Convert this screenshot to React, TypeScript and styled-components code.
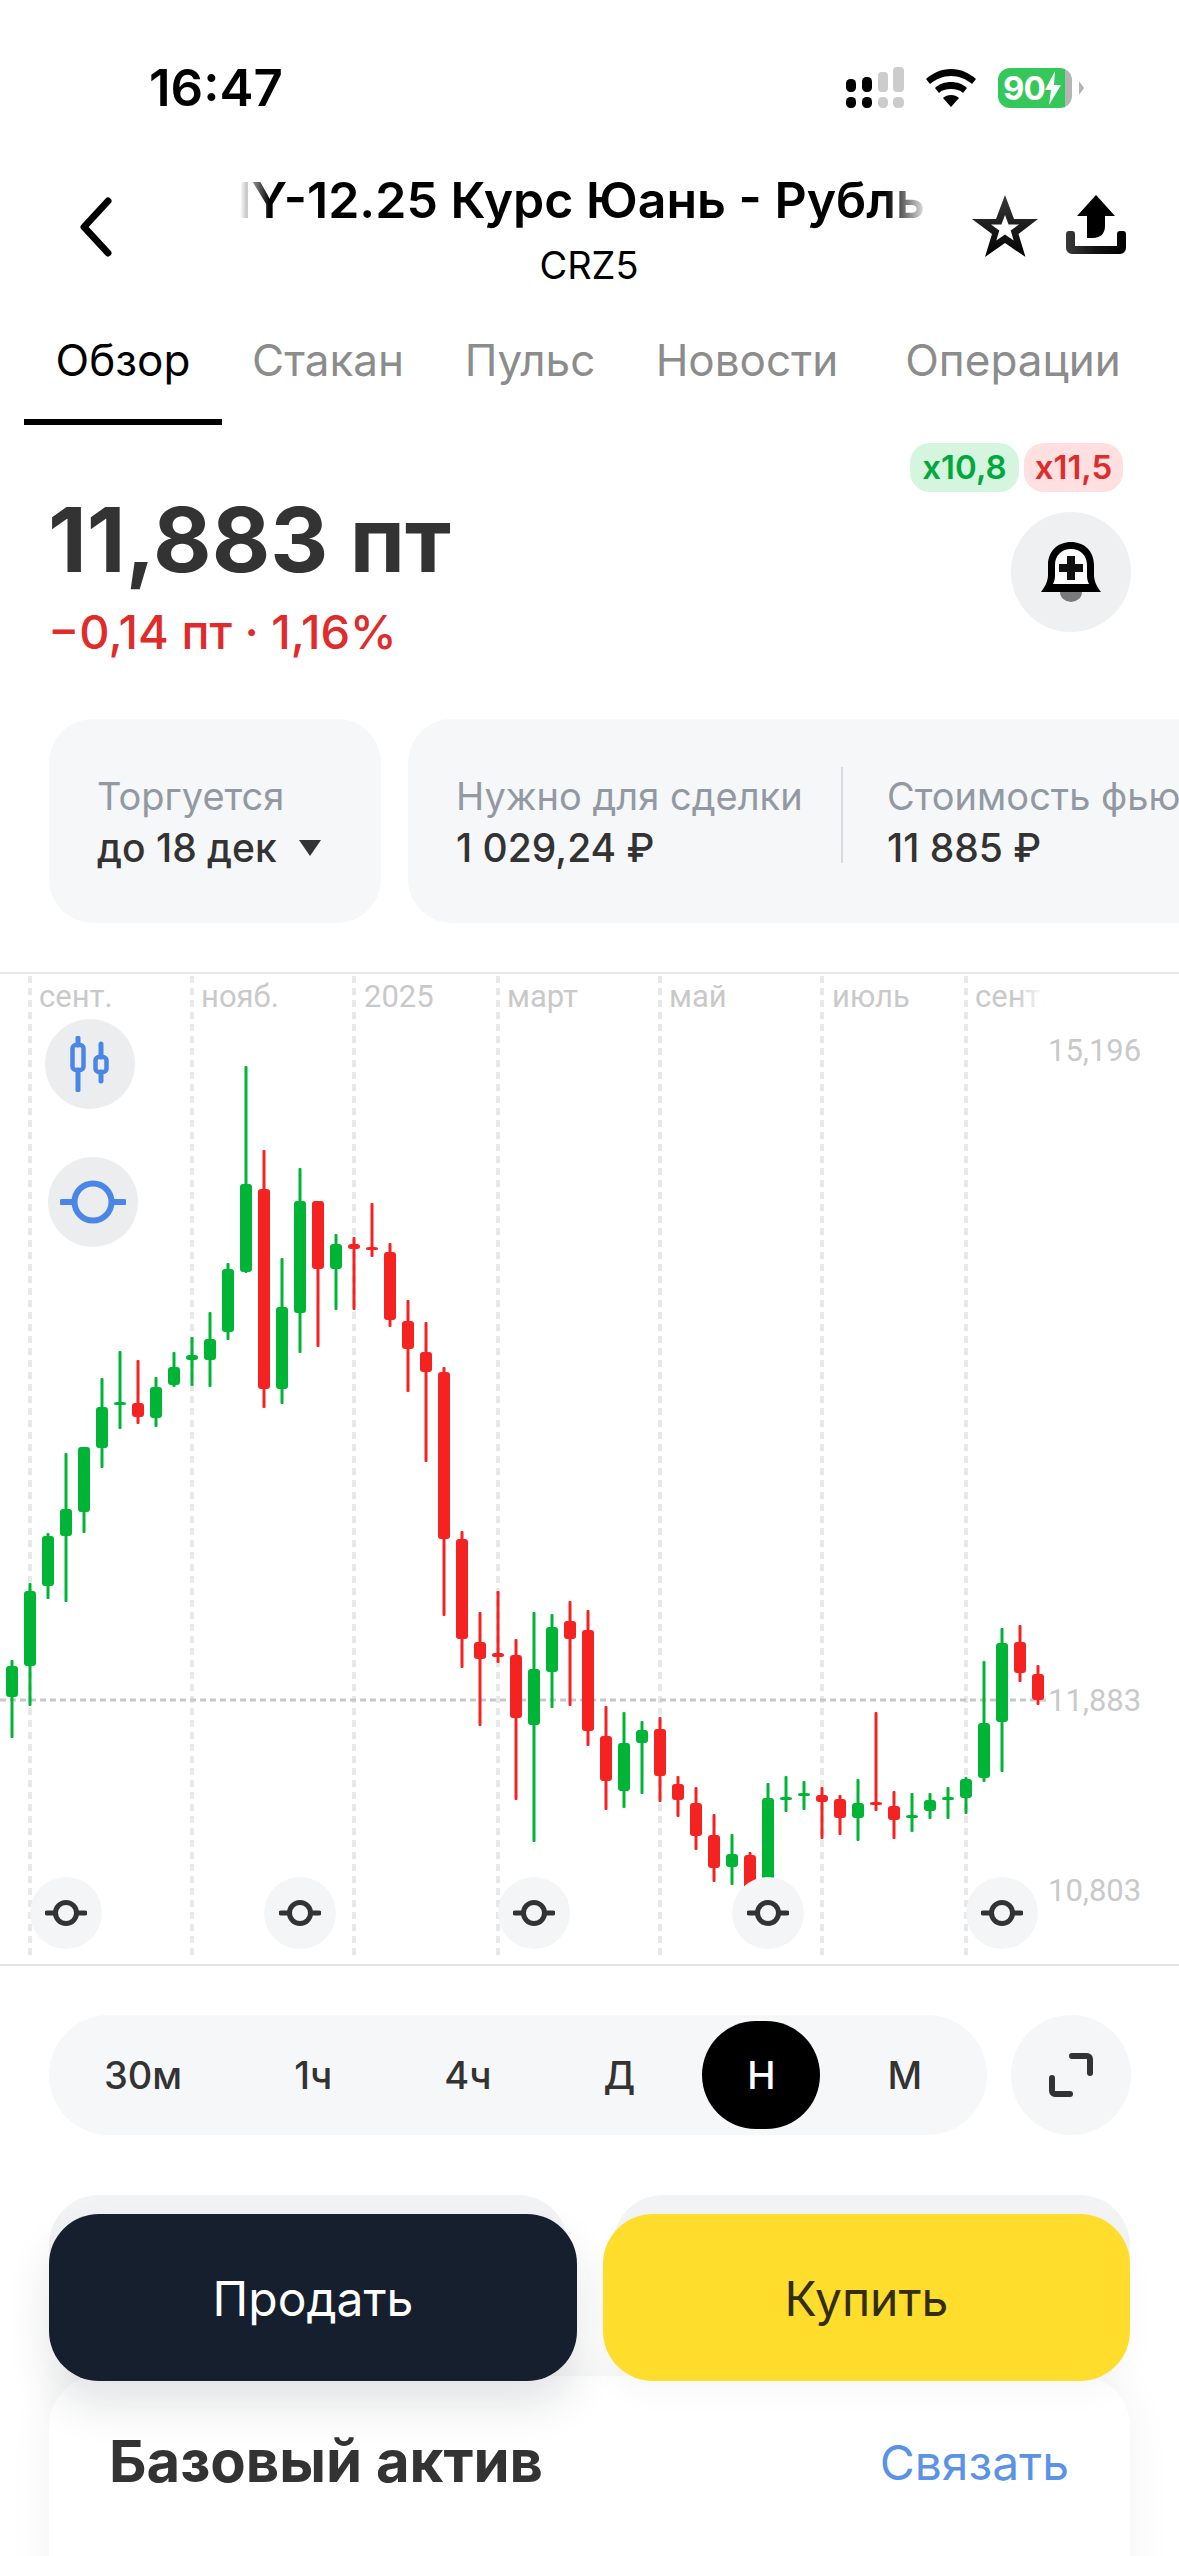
import React from 'react';
import styled, { createGlobalStyle } from 'styled-components';

const GREEN = '#00b536';
const RED = '#f52222';
const BLUE = '#4a86e8';
const DARK = '#333333';

const GlobalStyle = createGlobalStyle`
  html, body {
    margin: 0;
    padding: 0;
    background: #fff;
  }
  * {
    box-sizing: border-box;
  }
`;

const Page = styled.div`
  width: 1179px;
  height: 2556px;
  overflow: hidden;
  background: #fff;
  color: ${DARK};
  font-family: Inter, Roboto, 'Noto Sans', sans-serif;
`;

/* status bar */
const StatusBar = styled.div`
  height: 170px;
  padding: 67px 0 0 149px;
  display: flex;
  align-items: flex-start;
`;

const Time = styled.div`
  width: 697px;
  font-size: 51px;
  line-height: 42px;
  font-weight: 600;
  color: #000;
`;

const StatusIcons = styled.div`
  display: flex;
  align-items: center;
  gap: 22px;
`;

const Battery = styled.div`
  width: 74px;
  height: 40px;
  border-radius: 12px;
  background: linear-gradient(90deg, #34c759 91%, #b5b5b5 91%);
  color: #fff;
  font-size: 33px;
  font-weight: 700;
  line-height: 40px;
  letter-spacing: -1px;
  display: flex;
  align-items: center;
  padding-left: 5px;
  position: relative;

  &::after {
    content: '';
    position: absolute;
    right: -12px;
    top: 13px;
    border-left: 5px solid #b5b5b5;
    border-top: 7px solid transparent;
    border-bottom: 7px solid transparent;
  }
`;

/* header */
const Header = styled.div`
  height: 120px;
  display: grid;
  grid-template-columns: 240px 685px 1fr;
  align-items: start;
`;

const BackButton = styled.div`
  padding: 27px 0 0 79px;
  line-height: 0;
`;

const TitleBlock = styled.div`
  min-width: 0;
  display: flex;
  flex-direction: column;
  align-items: center;
`;

const Title = styled.div`
  width: 100%;
  display: flex;
  justify-content: flex-end;
  white-space: nowrap;
  overflow: hidden;
  font-size: 50px;
  line-height: 60px;
  font-weight: 600;
  color: #000;
  -webkit-mask-image: linear-gradient(90deg, transparent 0, #000 30px, #000 645px, transparent 690px);
  mask-image: linear-gradient(90deg, transparent 0, #000 30px, #000 645px, transparent 690px);
`;

const Ticker = styled.div`
  margin: 12px 0 0 13px;
  font-size: 38px;
  line-height: 46px;
  color: #000;
`;

const HeaderActions = styled.div`
  padding: 25px 0 0 47px;
  display: flex;
  align-items: flex-start;
  gap: 28px;
`;

/* tabs */
const Tabs = styled.div`
  margin-top: 30px;
  height: 105px;
  padding-left: 24px;
  display: flex;
`;

const Tab = styled.div<{ $active?: boolean; $width: number }>`
  width: ${(p) => p.$width}px;
  height: 105px;
  padding-top: 14px;
  text-align: center;
  font-size: 44px;
  line-height: 52px;
  white-space: nowrap;
  color: ${(p) => (p.$active ? '#000' : '#8c8c8c')};
  border-bottom: 6px solid ${(p) => (p.$active ? '#000' : 'transparent')};
`;

/* price */
const PriceBlock = styled.div`
  height: 294px;
  padding: 18px 48px 0 48px;
  display: flex;
  justify-content: space-between;
`;

const PriceColumn = styled.div`
  padding-top: 47px;
`;

const Price = styled.div`
  font-size: 90px;
  line-height: 100px;
  font-weight: 700;
  color: ${DARK};
`;

const Change = styled.div`
  margin-top: 16px;
  font-size: 47px;
  line-height: 52px;
  font-weight: 500;
  color: #e02b2b;
`;

const SideColumn = styled.div`
  display: flex;
  flex-direction: column;
  align-items: flex-end;
`;

const Badges = styled.div`
  margin-right: 8px;
  display: flex;
  gap: 5px;
`;

const Badge = styled.div<{ $tone: 'up' | 'down'; $width: number }>`
  width: ${(p) => p.$width}px;
  height: 49px;
  border-radius: 20px;
  text-align: center;
  font-size: 33px;
  line-height: 49px;
  font-weight: 600;
  color: ${(p) => (p.$tone === 'up' ? '#00a93c' : '#dd2c2c')};
  background: ${(p) => (p.$tone === 'up' ? '#d6f5df' : '#ffdfdf')};
`;

const RoundButton = styled.div<{ $bg: string; $size: number }>`
  width: ${(p) => p.$size}px;
  height: ${(p) => p.$size}px;
  border-radius: 50%;
  background: ${(p) => p.$bg};
  display: flex;
  align-items: center;
  justify-content: center;
  flex-shrink: 0;
`;

const BellSlot = styled.div`
  margin-top: 20px;
`;

/* stats */
const StatsRow = styled.div`
  height: 204px;
  padding-left: 49px;
  display: flex;
  gap: 27px;
`;

const StatCard = styled.div<{ $width: number }>`
  flex-shrink: 0;
  width: ${(p) => p.$width}px;
  height: 204px;
  border-radius: 44px;
  background: #f6f7f8;
  padding: 54px 0 0 48px;
  display: flex;
  align-items: flex-start;
`;

const Stat = styled.div<{ $width?: number }>`
  white-space: nowrap;
  flex-shrink: 0;
  width: ${(p) => (p.$width ? `${p.$width}px` : 'auto')};
`;

const StatDivider = styled.div`
  width: 2px;
  height: 96px;
  margin: -6px 44px 0 0;
  background: #d8dadd;
`;

const StatLabel = styled.div`
  font-size: 38px;
  line-height: 46px;
  color: #9299a2;
`;

const StatValue = styled.div`
  margin-top: 6px;
  font-size: 39px;
  line-height: 46px;
  font-weight: 500;
  color: ${DARK};
  display: flex;
  align-items: center;
  gap: 22px;
`;

const Caret = styled.span`
  width: 0;
  height: 0;
  border-left: 11px solid transparent;
  border-right: 11px solid transparent;
  border-top: 16px solid ${DARK};
`;

/* chart */
const ChartArea = styled.div`
  margin-top: 49px;
  height: 994px;
  position: relative;
  border-top: 2px solid #e6e7e9;
  border-bottom: 2px solid #e2e3e5;
`;

const ChartSvg = styled.svg`
  position: absolute;
  top: -2px;
  left: 0;
  display: block;
`;

const AxisText = styled.text`
  font-family: Roboto, sans-serif;
  font-size: 31px;
  fill: #c9c9c9;
`;

const ToggleSlot = styled.div<{ $x: number; $y: number }>`
  position: absolute;
  left: ${(p) => p.$x}px;
  top: ${(p) => p.$y}px;
`;

/* timeframe */
const TimeframeRow = styled.div`
  margin-top: 49px;
  padding: 0 48px 0 49px;
  display: flex;
  gap: 24px;
`;

const TimeframeBar = styled.div`
  width: 938px;
  height: 120px;
  border-radius: 60px;
  background: #f6f7f8;
  padding-left: 10px;
  display: flex;
  align-items: center;
  gap: 22px;
`;

const TimeframeItem = styled.div<{ $active?: boolean }>`
  height: 108px;
  padding: 0 45px;
  border-radius: 54px;
  font-size: 38px;
  line-height: 108px;
  font-weight: 500;
  color: ${(p) => (p.$active ? '#fff' : DARK)};
  background: ${(p) => (p.$active ? '#000' : 'transparent')};
`;

/* trade */
const TradeRow = styled.div`
  position: relative;
  z-index: 2;
  margin-top: 79px;
  padding: 0 49px;
  display: grid;
  grid-template-columns: 528px 527px;
  gap: 26px;
`;

const TradeButton = styled.div<{ $side: 'sell' | 'buy' }>`
  position: relative;
  height: 167px;
  border-radius: 50px;
  text-align: center;
  font-size: 48px;
  line-height: 170px;
  color: ${(p) => (p.$side === 'sell' ? '#fff' : '#332d0a')};
  background: ${(p) => (p.$side === 'sell' ? '#151f2e' : '#ffdd2d')};
  box-shadow: ${(p) => (p.$side === 'sell' ? '0 24px 44px rgba(21, 31, 46, 0.12)' : '0 14px 30px rgba(0, 0, 0, 0.03)')};

  &::before {
    content: '';
    position: absolute;
    z-index: -1;
    top: -19px;
    bottom: 19px;
    left: ${(p) => (p.$side === 'sell' ? '0' : '10px')};
    right: ${(p) => (p.$side === 'sell' ? '9px' : '0')};
    border-radius: 50px;
    background: #f1f3f5;
  }
`;

const AssetCard = styled.div`
  position: relative;
  z-index: 1;
  margin: -5px 49px 0;
  height: 260px;
  padding: 53px 61px 0 60px;
  border-radius: 50px;
  background: #fff;
  box-shadow: 0 0 44px rgba(0, 0, 0, 0.06);
  display: flex;
  justify-content: space-between;
  align-items: flex-start;
`;

const AssetTitle = styled.div`
  font-size: 58px;
  line-height: 64px;
  font-weight: 700;
  color: ${DARK};
`;

const AssetLink = styled.div`
  margin-top: 2px;
  font-size: 48px;
  line-height: 64px;
  color: #5a92e6;
`;

/* [high, body top, body bottom, low, colour] in page coordinates, x = 12 + 18 * index */
type Candle = [number, number, number, number, 'g' | 'r'];

const candles: Candle[] = [
  [1660, 1666, 1697, 1738, 'g'], [1583, 1591, 1666, 1706, 'g'], [1533, 1536, 1586, 1599, 'g'],
  [1453, 1509, 1536, 1602, 'g'], [1447, 1447, 1512, 1533, 'g'], [1378, 1407, 1448, 1468, 'g'],
  [1351, 1402, 1405, 1429, 'g'], [1360, 1403, 1417, 1424, 'r'], [1377, 1387, 1418, 1427, 'g'],
  [1352, 1367, 1385, 1387, 'g'], [1337, 1355, 1360, 1386, 'g'], [1312, 1339, 1360, 1387, 'g'],
  [1263, 1269, 1332, 1340, 'g'], [1066, 1184, 1272, 1273, 'g'], [1150, 1189, 1389, 1408, 'r'],
  [1258, 1307, 1389, 1404, 'g'], [1168, 1201, 1313, 1353, 'g'], [1201, 1201, 1269, 1347, 'r'],
  [1234, 1244, 1269, 1310, 'g'], [1237, 1244, 1249, 1310, 'r'], [1203, 1247, 1250, 1257, 'r'],
  [1243, 1252, 1320, 1327, 'r'], [1300, 1321, 1349, 1392, 'r'], [1322, 1352, 1372, 1462, 'r'],
  [1367, 1372, 1539, 1616, 'r'], [1531, 1539, 1639, 1668, 'r'], [1612, 1642, 1659, 1726, 'r'],
  [1591, 1653, 1657, 1663, 'r'], [1639, 1655, 1718, 1800, 'r'], [1612, 1669, 1725, 1842, 'g'],
  [1614, 1627, 1672, 1708, 'g'], [1601, 1621, 1639, 1706, 'r'], [1610, 1630, 1731, 1746, 'r'],
  [1706, 1736, 1781, 1810, 'r'], [1712, 1743, 1791, 1808, 'g'], [1721, 1730, 1743, 1794, 'g'],
  [1717, 1729, 1776, 1802, 'r'], [1776, 1784, 1800, 1817, 'r'], [1787, 1803, 1836, 1850, 'r'],
  [1814, 1835, 1868, 1882, 'r'], [1834, 1854, 1867, 1885, 'g'], [1852, 1855, 1892, 1892, 'r'],
  [1783, 1798, 1892, 1892, 'g'], [1776, 1797, 1799, 1812, 'g'], [1781, 1793, 1796, 1810, 'g'],
  [1787, 1795, 1802, 1839, 'r'], [1795, 1799, 1818, 1835, 'r'], [1779, 1803, 1818, 1841, 'g'],
  [1712, 1802, 1805, 1811, 'r'], [1791, 1806, 1820, 1839, 'r'], [1793, 1815, 1817, 1832, 'g'],
  [1793, 1800, 1811, 1819, 'g'], [1787, 1797, 1799, 1819, 'g'], [1777, 1779, 1798, 1814, 'g'],
  [1661, 1723, 1778, 1782, 'g'], [1628, 1643, 1722, 1772, 'g'], [1625, 1642, 1673, 1682, 'r'],
  [1665, 1674, 1700, 1705, 'r'],
];

const gridLines = [30, 192, 354, 498, 660, 822, 966];
const monthLabels: [string, number][] = [
  ['сент.', 39], ['нояб.', 201], ['2025', 364], ['март', 507], ['май', 669], ['июль', 832],
];
const priceLabels: [string, number][] = [['15,196', 1061], ['11,883', 1711], ['10,803', 1901]];
const markerCenters = [66, 300, 534, 768, 1002];

const CandleChart = () => (
  <ChartSvg width="1179" height="994" viewBox="0 972 1179 994">
    <defs>
      <linearGradient id="labelFade" x1="975" x2="1045" y1="0" y2="0" gradientUnits="userSpaceOnUse">
        <stop offset="0.6" stopColor="#c9c9c9" />
        <stop offset="1" stopColor="#c9c9c9" stopOpacity="0" />
      </linearGradient>
    </defs>
    {gridLines.map((x) => (
      <line key={x} x1={x} x2={x} y1="976" y2="1960" stroke="#e8e8e8" strokeWidth="4" strokeDasharray="7 5" />
    ))}
    <line x1="0" x2="1046" y1="1700" y2="1700" stroke="#c8c8cc" strokeWidth="3" strokeDasharray="6 4" />
    {monthLabels.map(([text, x]) => (
      <AxisText key={x} x={x} y="1007">{text}</AxisText>
    ))}
    <AxisText x="975" y="1007" style={{ fill: 'url(#labelFade)' }}>сент.</AxisText>
    {priceLabels.map(([text, y]) => (
      <AxisText key={text} x="1048" y={y}>{text}</AxisText>
    ))}
    {candles.map(([high, top, bottom, low, tone], i) => {
      const x = 12 + i * 18;
      const color = tone === 'g' ? GREEN : RED;
      return (
        <g key={x} fill={color}>
          <rect x={x - 1.5} y={high} width="3" height={low - high} rx="1" />
          <rect x={x - 6} y={top} width="12" height={Math.max(bottom - top, 3)} rx="3" />
        </g>
      );
    })}
  </ChartSvg>
);

const CandlesIcon = () => (
  <svg width="40" height="56" viewBox="0 0 40 56" fill="none" stroke={BLUE} strokeLinecap="round">
    <path d="M8 2v7M8 34v20" strokeWidth="5" />
    <rect x="2.5" y="9" width="11" height="25" rx="3.5" strokeWidth="4.5" />
    <path d="M31 8v13M31 36v9" strokeWidth="5" />
    <rect x="25.5" y="21" width="11" height="15" rx="3.5" strokeWidth="4.5" />
  </svg>
);

const LineToggleIcon = () => (
  <svg width="66" height="48" viewBox="0 0 66 48" fill="none" stroke={BLUE}>
    <circle cx="33" cy="24" r="18.5" strokeWidth="6" />
    <path d="M2 24h12M52 24h12" strokeWidth="6" strokeLinecap="round" />
  </svg>
);

const MarkerIcon = () => (
  <svg width="42" height="28" viewBox="0 0 42 28" fill="none" stroke={DARK}>
    <circle cx="21" cy="14" r="10.5" strokeWidth="5" />
    <path d="M2 14h8M32 14h8" strokeWidth="5" strokeLinecap="round" />
  </svg>
);

const BackIcon = () => (
  <svg width="34" height="60" viewBox="0 0 34 60" fill="none" stroke="#000" strokeWidth="7" strokeLinecap="round" strokeLinejoin="round">
    <path d="M29 4L5 30l24 26" />
  </svg>
);

const StarIcon = () => (
  <svg width="66" height="62" viewBox="0 0 66 62">
    <defs>
      <linearGradient id="starFill" x1="0" x2="0" y1="0" y2="1">
        <stop offset="0" stopColor="#3a3a3a" />
        <stop offset="1" stopColor="#000" />
      </linearGradient>
    </defs>
    <path d="M33 0l9 24h24L46.500 39l7 23L33 48 13 62l7-23L0 24h24z" fill="url(#starFill)" />
    <path d="M33 20l3.600 9.500H47l-8.300 6 3 10L33 39.500 24.300 45.500l3-10-8.300-6h10.400z" fill="#fff" />
  </svg>
);

const ShareIcon = () => (
  <svg width="60" height="60" viewBox="0 0 60 60">
    <defs>
      <linearGradient id="trayFill" x1="0" x2="1" y1="0" y2="0">
        <stop offset="0" stopColor="#3a3a3a" />
        <stop offset="0.5" stopColor="#111" />
        <stop offset="1" stopColor="#000" />
      </linearGradient>
    </defs>
    <path d="M30 0L49 21H39v10c0 7-4 12-12 12h-6V21H11z" fill="#000" />
    <path
      d="M0 39a3 3 0 0 1 3-3h3a3 3 0 0 1 3 3v12h42V39a3 3 0 0 1 3-3h3a3 3 0 0 1 3 3v14a6 6 0 0 1-6 6H6a6 6 0 0 1-6-6z"
      fill="url(#trayFill)"
    />
  </svg>
);

const BellIcon = () => (
  <svg width="60" height="60" viewBox="0 0 60 60">
    <path d="M19 50h22a11 10 0 0 1-22 0z" fill="#7a7a7a" />
    <path d="M30 0c13 0 23 9 23 23v10c0 6 3 12 7 17H0c4-5 7-11 7-17V23C7 9 17 0 30 0z" fill="#000" />
    <path d="M30 7c-10 0-16 7-16 16v11c0 3-1 6-2 8h36c-1-2-2-5-2-8V23c0-9-6-16-16-16z" fill="#fff" />
    <path fill="#111" d="M26 14h8v8h8v8h-8v8h-8v-8h-8v-8h8z" />
  </svg>
);

const ExpandIcon = () => (
  <svg width="44" height="44" viewBox="0 0 44 44" fill="none" stroke={DARK} strokeWidth="6" strokeLinecap="round" strokeLinejoin="round">
    <path d="M23 3h15a3 3 0 0 1 3 3v14" />
    <path d="M3 25v13a3 3 0 0 0 3 3h15" />
  </svg>
);

const SignalIcon = () => (
  <svg width="58" height="41" viewBox="0 0 58 41">
    <g fill="#000">
      <rect x="0" y="12" width="10" height="13" rx="4.500" />
      <rect x="16" y="10" width="10" height="15" rx="4.500" />
      <rect x="0" y="30" width="10" height="11" rx="4.500" />
      <rect x="16" y="30" width="10" height="11" rx="4.500" />
    </g>
    <g fill="#cccccc">
      <rect x="32" y="5" width="10" height="20" rx="4" />
      <rect x="47" y="0" width="11" height="25" rx="4" />
      <rect x="32" y="30" width="10" height="11" rx="4.500" />
      <rect x="47" y="30" width="11" height="11" rx="4.500" />
    </g>
  </svg>
);

const WifiIcon = () => (
  <svg width="50" height="38" viewBox="0 0 50 38">
    <path d="M25 0c10 0 18 4 25 10l-4 5C40 10 33 7 25 7S10 10 4 15l-4-5C7 4 15 0 25 0z" fill="#000" />
    <path d="M25 13c6 0 12 2 16 6l-4 5c-3-3-7-4-12-4s-9 1-12 4l-4-5c4-4 10-6 16-6z" fill="#000" />
    <path d="M25 26c3 0 6 1 8 3l-8 9-8-9c2-2 5-3 8-3z" fill="#000" />
  </svg>
);

const BoltIcon = () => (
  <svg width="16" height="34" viewBox="0 0 16 34">
    <path d="M10 0L0 19h6L4 34l12-20H9z" fill="#fff" />
  </svg>
);

const timeframes = ['30м', '1ч', '4ч', 'Д', 'Н', 'М'];

export default function App() {
  return (
    <Page>
      <GlobalStyle />
      <StatusBar>
        <Time>16:47</Time>
        <StatusIcons>
          <SignalIcon />
          <WifiIcon />
          <Battery>
            90
            <BoltIcon />
          </Battery>
        </StatusIcons>
      </StatusBar>

      <Header>
        <BackButton>
          <BackIcon />
        </BackButton>
        <TitleBlock>
          <Title>CNY-12.25 Курс Юань - Рубль</Title>
          <Ticker>CRZ5</Ticker>
        </TitleBlock>
        <HeaderActions>
          <StarIcon />
          <ShareIcon />
        </HeaderActions>
      </Header>

      <Tabs>
        <Tab $active $width={198}>Обзор</Tab>
        <Tab $width={212}>Стакан</Tab>
        <Tab $width={192}>Пульс</Tab>
        <Tab $width={242}>Новости</Tab>
        <Tab $width={290}>Операции</Tab>
      </Tabs>

      <PriceBlock>
        <PriceColumn>
          <Price>11,883 пт</Price>
          <Change>−0,14 пт · 1,16%</Change>
        </PriceColumn>
        <SideColumn>
          <Badges>
            <Badge $tone="up" $width={109}>x10,8</Badge>
            <Badge $tone="down" $width={99}>x11,5</Badge>
          </Badges>
          <BellSlot>
            <RoundButton $bg="#eef0f2" $size={120}>
              <BellIcon />
            </RoundButton>
          </BellSlot>
        </SideColumn>
      </PriceBlock>

      <StatsRow>
        <StatCard $width={332}>
          <Stat>
            <StatLabel>Торгуется</StatLabel>
            <StatValue>
              до 18 дек
              <Caret />
            </StatValue>
          </Stat>
        </StatCard>
        <StatCard $width={900}>
          <Stat $width={385}>
            <StatLabel>Нужно для сделки</StatLabel>
            <StatValue>1 029,24 ₽</StatValue>
          </Stat>
          <StatDivider />
          <Stat>
            <StatLabel>Стоимость фьючерса</StatLabel>
            <StatValue>11 885 ₽</StatValue>
          </Stat>
        </StatCard>
      </StatsRow>

      <ChartArea>
        <CandleChart />
        <ToggleSlot $x={45} $y={45}>
          <RoundButton $bg="#ebedef" $size={90}>
            <CandlesIcon />
          </RoundButton>
        </ToggleSlot>
        <ToggleSlot $x={48} $y={183}>
          <RoundButton $bg="#ebedef" $size={90}>
            <LineToggleIcon />
          </RoundButton>
        </ToggleSlot>
        {markerCenters.map((x) => (
          <ToggleSlot key={x} $x={x - 36} $y={903}>
            <RoundButton $bg="#f4f5f6" $size={72}>
              <MarkerIcon />
            </RoundButton>
          </ToggleSlot>
        ))}
      </ChartArea>

      <TimeframeRow>
        <TimeframeBar>
          {timeframes.map((item) => (
            <TimeframeItem key={item} $active={item === 'Н'}>{item}</TimeframeItem>
          ))}
        </TimeframeBar>
        <RoundButton $bg="#f5f6f7" $size={120}>
          <ExpandIcon />
        </RoundButton>
      </TimeframeRow>

      <TradeRow>
        <TradeButton $side="sell">Продать</TradeButton>
        <TradeButton $side="buy">Купить</TradeButton>
      </TradeRow>

      <AssetCard>
        <AssetTitle>Базовый актив</AssetTitle>
        <AssetLink>Связать</AssetLink>
      </AssetCard>
    </Page>
  );
}
